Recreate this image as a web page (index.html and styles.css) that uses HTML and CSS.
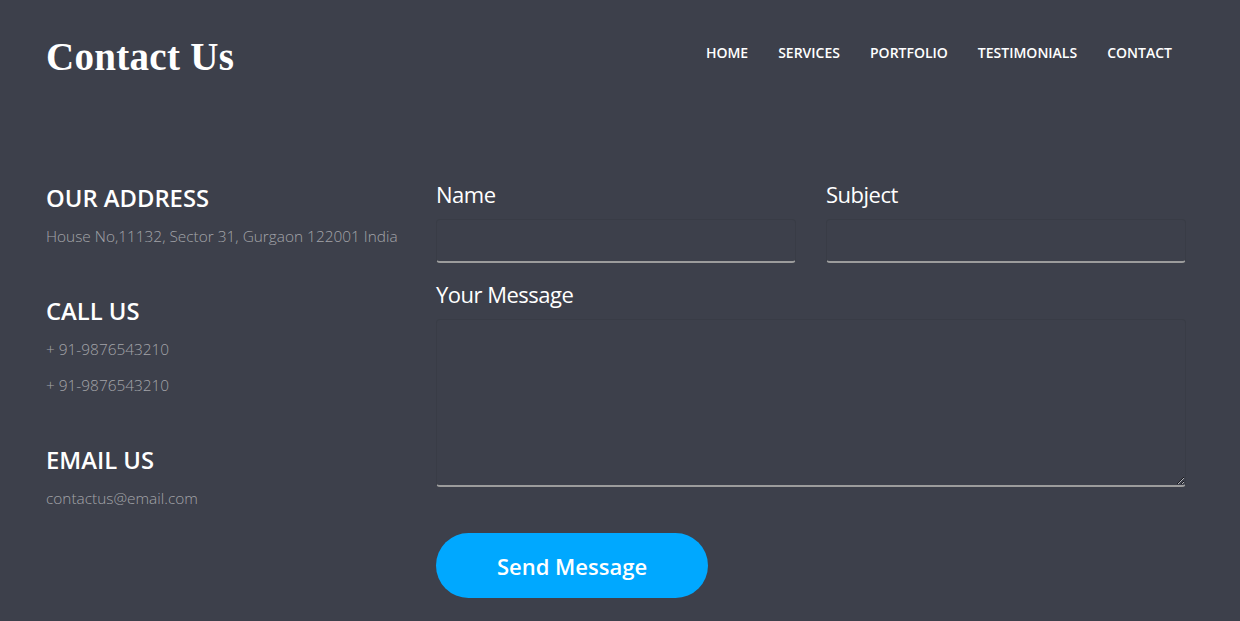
FILE: index.html
```html
<!DOCTYPE html>
<html lang="en">
<head>
<meta charset="utf-8">
<title>Contact Us</title>
<link rel="stylesheet" href="styles.css">
</head>
<body>
<div class="page">
  <header class="header">
    <h1 class="title">Contact Us</h1>
    <nav class="nav">
      <a href="#">HOME</a>
      <a href="#">SERVICES</a>
      <a href="#">PORTFOLIO</a>
      <a href="#">TESTIMONIALS</a>
      <a href="#">CONTACT</a>
    </nav>
  </header>
  <main class="content">
    <aside class="info">
      <section class="info-block">
        <h2>OUR ADDRESS</h2>
        <p>House No,11132, Sector 31, Gurgaon 122001 India</p>
      </section>
      <section class="info-block">
        <h2>CALL US</h2>
        <p>+ 91-9876543210</p>
        <p>+ 91-9876543210</p>
      </section>
      <section class="info-block">
        <h2>EMAIL US</h2>
        <p>contactus@email.com</p>
      </section>
    </aside>
    <form class="form">
      <div class="row">
        <label class="field">
          <span class="label">Name</span>
          <input type="text">
        </label>
        <label class="field">
          <span class="label">Subject</span>
          <input type="text">
        </label>
      </div>
      <label class="field">
        <span class="label">Your Message</span>
        <textarea></textarea>
      </label>
      <button type="button" class="send">Send Message</button>
    </form>
  </main>
</div>
</body>
</html>
```

FILE: styles.css
```css
* { box-sizing: border-box; }
html, body { margin: 0; height: 100%; }
body {
  background: #3d404b;
  font-family: "Open Sans", "Liberation Sans", sans-serif;
  color: #fff;
}
.page {
  padding: 0 54px 0 46px;
}
.header {
  display: flex;
  justify-content: space-between;
  align-items: center;
  height: 112px;
}
.title {
  margin: 0;
  font-family: "Liberation Serif", "DejaVu Serif", serif;
  font-weight: 700;
  font-size: 39px;
  letter-spacing: 0.3px;
}
.nav {
  display: flex;
  margin-top: -8px;
  margin-right: -1px;
}
.nav a {
  color: #fff;
  text-decoration: none;
  font-size: 14px;
  font-weight: 600;
  padding: 0 15px;
}
.content {
  display: flex;
  gap: 30px;
  padding-top: 67px;
}
.info {
  width: 360px;
  flex: none;
  padding-top: 4px;
}
.info-block {
  margin-bottom: 47px;
}
.info h2 {
  margin: 0 0 12px;
  font-size: 23.8px;
  font-weight: 600;
  line-height: 30px;
}
.info p {
  margin: 0 0 12px;
  font-size: 15.4px;
  font-weight: 300;
  color: #a3a4a9;
  line-height: 24px;
}
.form {
  flex: 1;
  display: flex;
  flex-direction: column;
}
.row {
  display: flex;
  gap: 30px;
}
.row .field { flex: 1; }
.field {
  display: flex;
  flex-direction: column;
}
.label {
  font-size: 22px;
  line-height: 30px;
  margin-bottom: 10px;
  letter-spacing: -0.5px;
}
input, textarea {
  background: transparent;
  border: 1px solid #393c46;
  border-bottom: 2px solid #9c9c9c;
  border-radius: 4px;
  color: #fff;
  font: inherit;
  outline: none;
}
input { height: 44px; }
textarea { height: 168px; }
.row + .field { margin-top: 16px; }
.send {
  margin-top: 46px;
  width: 272px;
  height: 65px;
  border: none;
  border-radius: 33px;
  background: #00a8ff;
  color: #fff;
  font-family: "Open Sans", "Liberation Sans", sans-serif;
  font-size: 22px;
  font-weight: 600;
  cursor: pointer;
}
```
